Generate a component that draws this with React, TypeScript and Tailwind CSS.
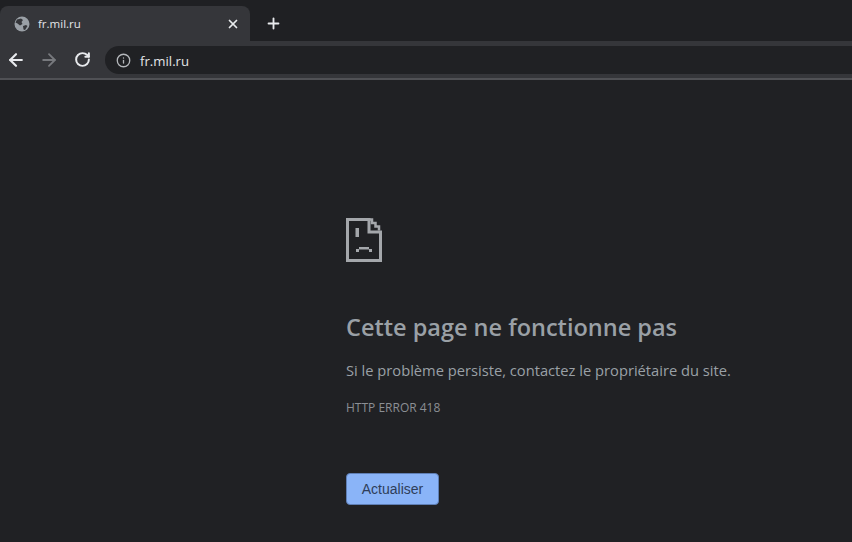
import { ArrowLeft, ArrowRight, RotateCw, X, Plus, Info } from "lucide-react";

function GlobeIcon() {
  return (
    <svg width="16" height="16" viewBox="0 0 16 16" className="shrink-0">
      <circle cx="8" cy="8" r="7.5" fill="#9aa0a6" />
      <path d="M3 3.5 L7 2.5 L9 4 L7.5 6 L8.5 8 L6 9.5 L3.5 7.5 L1.5 6.5 Z" fill="#35363a" />
      <path d="M9 10 L12 9 L13.5 10 L11 14 L9.5 13.5 Z" fill="#35363a" />
    </svg>
  );
}

function SadPage() {
  return (
    <svg width="36" height="44" viewBox="0 0 36 44" fill="none" className="block">
      <path d="M1.5 1.5 H23 V14 H34.5 V42.5 H1.5 Z" stroke="#a4a7ab" strokeWidth="3" />
      <path d="M23 1.5 H26 V5 H29.5 V8.5 H33 V12.5" stroke="#a4a7ab" strokeWidth="2.5" />
      <rect x="9.5" y="10" width="3.5" height="9" fill="#a4a7ab" />
      <path d="M10 34 V31 H13 V29 H23 V31 H26 V34 H23 V31.5 H13 V34 Z" fill="#a4a7ab" />
    </svg>
  );
}

export default function App() {
  return (
    <div className="h-[542px] w-[852px] overflow-hidden bg-[#202124] font-['Open_Sans','Noto_Sans',sans-serif]">
      <div className="flex h-[41px] items-end bg-[#1f2023]">
        <div className="flex h-[35px] w-[250px] items-center rounded-t-lg bg-[#35363a] pl-[14px] pr-[10px]">
          <GlobeIcon />
          <span className="ml-[8px] flex-1 text-[11.5px] text-[#e3e5e8]">fr.mil.ru</span>
          <X size={14} strokeWidth={3} color="#e8eaed" />
        </div>
        <div className="mb-[9px] ml-[15px]">
          <Plus size={17} strokeWidth={2.6} color="#e8eaed" />
        </div>
      </div>
      <div className="flex h-[35px] items-center bg-[#35363a] pl-[6px]">
        <ArrowLeft size={20} strokeWidth={2.6} color="#e8eaed" className="mt-[2px]" />
        <ArrowRight size={20} strokeWidth={2.2} color="#77797d" className="ml-[13px] mt-[2px]" />
        <RotateCw size={17} strokeWidth={2.8} color="#e8eaed" className="ml-[15px] mt-[2px]" />
        <div className="ml-[14px] mt-[3px] flex h-[28px] flex-1 items-center rounded-l-full bg-[#202124] pl-[11px]">
          <Info size={15} strokeWidth={2.1} color="#b4b7bb" />
          <span className="ml-[9px] text-[13.2px] leading-[20px] pt-[1px] text-[#e3e5e8]">fr.mil.ru</span>
        </div>
      </div>
      <div className="h-[2px] bg-[#35363a]" />
      <div className="h-[2px] bg-[#505155]" />
      <main className="pl-[346px] pt-[138px]">
        <SadPage />
        <h1 className="mt-[50px] text-[23.5px] leading-[30px] font-semibold text-[#9aa0a6]">Cette page ne fonctionne pas</h1>
        <p className="mt-[18px] text-[14.7px] leading-[20px] text-[#9aa0a6]">Si le problème persiste, contactez le propriétaire du site.</p>
        <p className="mt-[20px] text-[12px] leading-[16px] text-[#8b8f94]">HTTP ERROR 418</p>
        <button className="mt-[57px] h-[32px] w-[93px] rounded-[4px] border border-[#5f7fb5] bg-[#8ab4f8] font-['Liberation_Sans',sans-serif] text-[14px] text-[#2f3e5a]">Actualiser</button>
      </main>
    </div>
  );
}
